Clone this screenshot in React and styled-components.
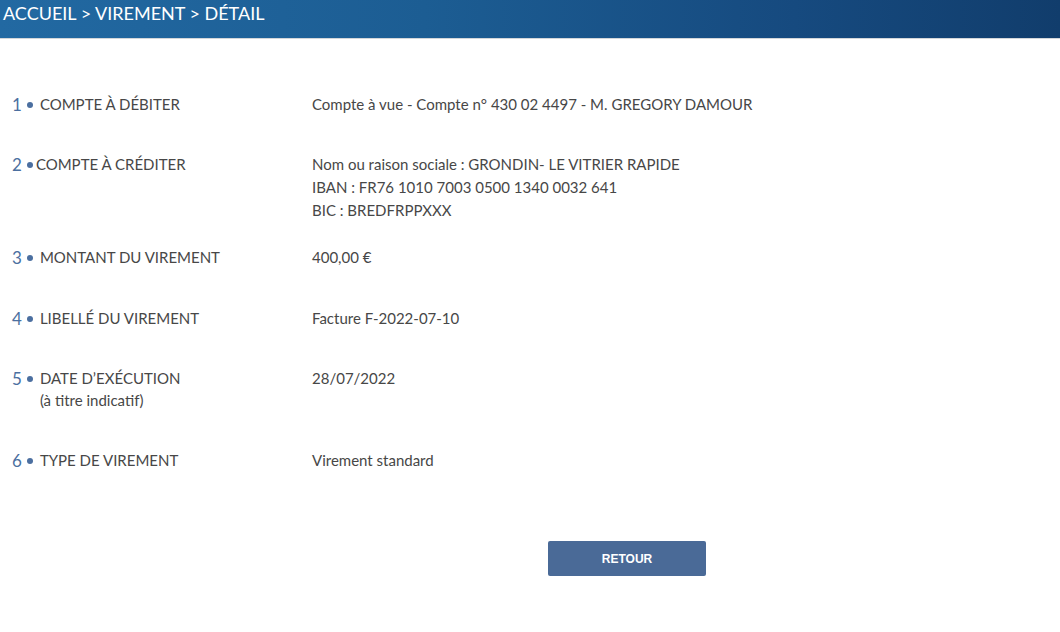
import React from "react";
import styled, { createGlobalStyle } from "styled-components";

const Global = createGlobalStyle`
  html, body { margin: 0; padding: 0; background: #fff; }
  body { font-family: Lato, "Open Sans", sans-serif; }
`;

const Page = styled.div`
  width: 1060px;
  min-height: 632px;
  background: #fff;
`;

const Header = styled.header`
  height: 38px;
  background: linear-gradient(90deg, #2269a2 0%, #1c5d93 40%, #164a7f 75%, #113d6c 100%);
  border-bottom: 1px solid #d3d6d9;
  box-sizing: content-box;
  padding-left: 3px;
  display: flex;
  align-items: flex-start;
`;

const Crumb = styled.h1`
  margin: 0;
  padding-top: 2px;
  font-family: Lato, sans-serif;
  font-weight: 400;
  font-size: 18px;
  line-height: 22px;
  color: #fff;
`;

const List = styled.section`
  padding: 54px 0 0 12px;
  display: flex;
  flex-direction: column;
`;

const Row = styled.div`
  display: grid;
  grid-template-columns: 300px 1fr;
  margin-bottom: ${(p) => p.$gap}px;
`;

const Label = styled.div`
  display: flex;
  align-items: flex-start;
  gap: ${(p) => (p.$tight ? 3 : 7)}px;
`;

const Num = styled.span`
  font-size: 17px;
  line-height: 23px;
  color: #4b6fa0;
  display: inline-flex;
  align-items: center;
  gap: 5px;
  &::after {
    content: "";
    width: 6px;
    height: 6px;
    border-radius: 50%;
    background: #4b6fa0;
    margin-top: 1px;
  }
`;

const LabelText = styled.div`
  font-size: 15px;
  line-height: 22px;
  color: #474747;
`;

const Value = styled.div`
  font-size: 15px;
  line-height: 23px;
  color: #474747;
`;

const Actions = styled.div`
  display: flex;
  padding-left: 548px;
  margin-top: 69px;
`;

const Button = styled.button`
  width: 158px;
  height: 35px;
  border: none;
  border-radius: 2px;
  background: #4a6a97;
  color: #fff;
  font-family: "Liberation Sans", Arial, sans-serif;
  font-weight: 700;
  font-size: 12px;
  cursor: pointer;
`;

const rows = [
  { n: 1, label: ["COMPTE À DÉBITER"], value: ["Compte à vue - Compte n° 430 02 4497 - M. GREGORY DAMOUR"], gap: 37 },
  {
    n: 2,
    tight: true,
    label: ["COMPTE À CRÉDITER"],
    value: [
      "Nom ou raison sociale : GRONDIN- LE VITRIER RAPIDE",
      "IBAN : FR76 1010 7003 0500 1340 0032 641",
      "BIC : BREDFRPPXXX",
    ],
    gap: 24,
  },
  { n: 3, label: ["MONTANT DU VIREMENT"], value: ["400,00 €"], gap: 38 },
  { n: 4, label: ["LIBELLÉ DU VIREMENT"], value: ["Facture F-2022-07-10"], gap: 37 },
  { n: 5, label: ["DATE D’EXÉCUTION", "(à titre indicatif)"], value: ["28/07/2022"], gap: 38 },
  { n: 6, label: ["TYPE DE VIREMENT"], value: ["Virement standard"], gap: 0 },
];

export default function App() {
  return (
    <Page>
      <Global />
      <Header>
        <Crumb>ACCUEIL &gt; VIREMENT &gt; DÉTAIL</Crumb>
      </Header>
      <List>
        {rows.map((r) => (
          <Row key={r.n} $gap={r.gap}>
            <Label $tight={r.tight}>
              <Num>{r.n}</Num>
              <LabelText>
                {r.label.map((l, i) => (
                  <div key={i}>{l}</div>
                ))}
              </LabelText>
            </Label>
            <Value>
              {r.value.map((v, i) => (
                <div key={i}>{v}</div>
              ))}
            </Value>
          </Row>
        ))}
      </List>
      <Actions>
        <Button>RETOUR</Button>
      </Actions>
    </Page>
  );
}
